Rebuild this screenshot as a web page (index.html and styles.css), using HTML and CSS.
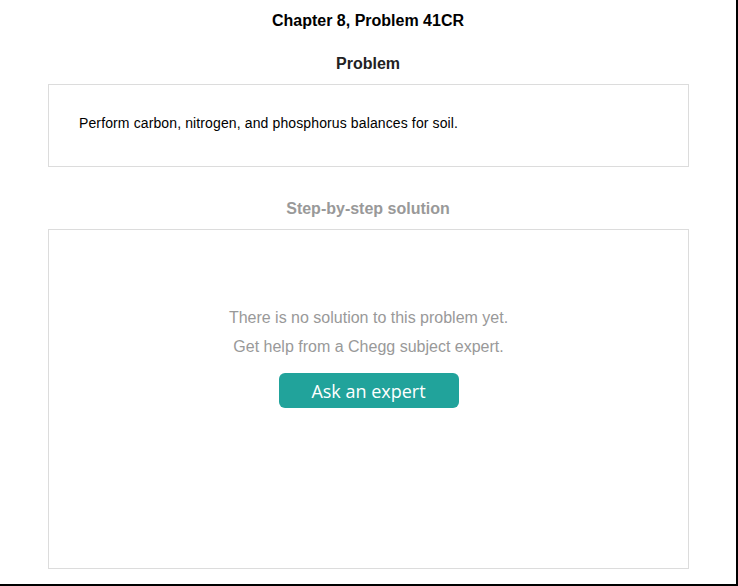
FILE: index.html
```html
<!DOCTYPE html>
<html>
<head>
<meta charset="utf-8">
<link rel="stylesheet" href="styles.css">
</head>
<body>
<div class="page">
  <h1 class="title">Chapter 8, Problem 41CR</h1>
  <h2 class="heading">Problem</h2>
  <div class="box problem-box">
    <p class="problem-text">Perform carbon, nitrogen, and phosphorus balances for soil.</p>
  </div>
  <h2 class="heading heading-muted">Step-by-step solution</h2>
  <div class="box solution-box">
    <p class="empty-line">There is no solution to this problem yet.</p>
    <p class="empty-line">Get help from a Chegg subject expert.</p>
    <button class="ask-btn" type="button">Ask an expert</button>
  </div>
</div>
</body>
</html>
```
FILE: styles.css
```css
html, body {
  margin: 0;
  padding: 0;
  background: #fff;
}
.page {
  width: 736px;
  height: 584px;
  border-right: 2px solid #000;
  border-bottom: 2px solid #000;
  font-family: "Liberation Sans", Arial, sans-serif;
  display: flex;
  flex-direction: column;
  align-items: center;
}
.title {
  margin: 12px 0 0;
  font-size: 16px;
  line-height: 18px;
  font-weight: bold;
  color: #000;
}
.heading {
  margin: 25px 0 11px;
  font-size: 16px;
  line-height: 18px;
  font-weight: bold;
  color: #222;
}
.heading-muted {
  margin-top: 33px;
  color: #999;
}
.box {
  box-sizing: border-box;
  width: 641px;
  margin-left: 1px;
  border: 1px solid #dcdcdc;
}
.problem-box {
  height: 83px;
  display: flex;
  align-items: center;
  padding: 0 30px 5px;
}
.problem-text {
  margin: 0;
  font-size: 14px;
  letter-spacing: 0.12px;
  color: #000;
}
.solution-box {
  height: 340px;
  padding-top: 73px;
  display: flex;
  flex-direction: column;
  align-items: center;
}
.empty-line {
  margin: 0;
  font-size: 16px;
  line-height: 29px;
  color: #999;
}
.ask-btn {
  margin-top: 12px;
  width: 180px;
  height: 35px;
  border: none;
  border-radius: 6px;
  background: #21a39b;
  color: #fff;
  font-family: "Open Sans", sans-serif;
  font-size: 18px;
  padding: 0;
  cursor: pointer;
}
```
